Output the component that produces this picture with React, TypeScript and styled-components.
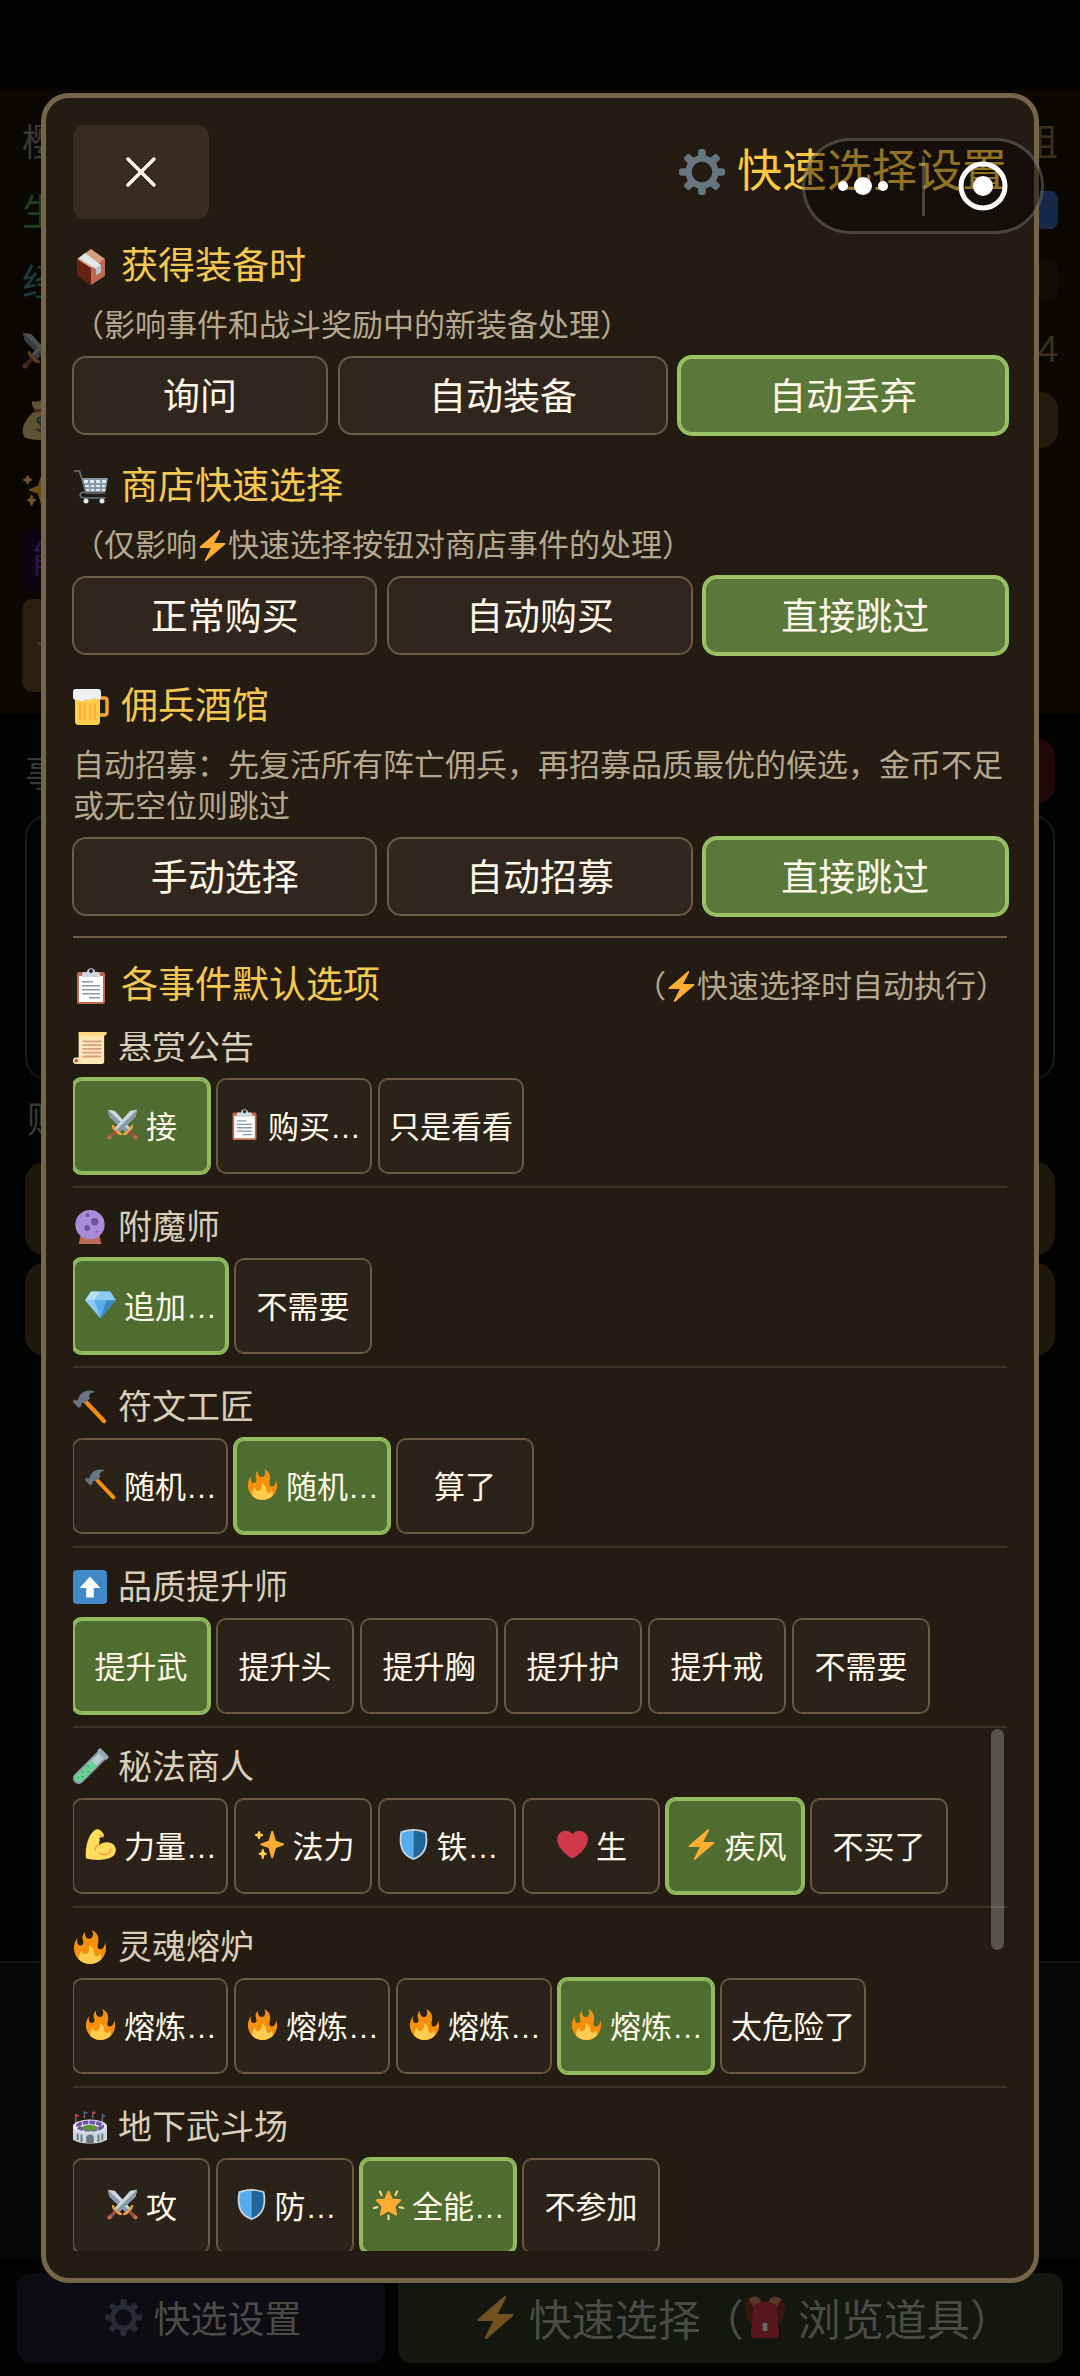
import React, { useLayoutEffect, useRef, useState } from "react";
import styled, { createGlobalStyle, css } from "styled-components";

const GlobalStyle = createGlobalStyle`
  *, *::before, *::after { box-sizing: border-box; }
  body {
    margin: 0;
    background: #020201;
    font-family: "Liberation Sans", "Noto Sans CJK SC", sans-serif;
  }
  button { font-family: inherit; cursor: pointer; }
  h2, h3, h4, p { margin: 0; font-weight: 400; }
`;

/* ---------- emoji-style icons, all on a 36 x 36 grid ---------- */

const icons: Record<string, React.ReactNode> = {
  gear: (
    <path
      fill="#66757f"
      d="M34 15h-3.362c-.324-1.369-.864-2.651-1.582-3.814l2.379-2.379c.781-.781.781-2.048 0-2.829l-1.414-1.414c-.781-.781-2.047-.781-2.828 0l-2.379 2.379C23.65 6.225 22.369 5.686 21 5.362V2c0-1.104-.896-2-2-2h-2c-1.104 0-2 .896-2 2v3.362c-1.369.324-2.651.864-3.814 1.582L8.808 4.565c-.781-.781-2.048-.781-2.828 0L4.565 5.979c-.781.781-.781 2.048-.001 2.829l2.379 2.379C6.225 12.35 5.686 13.632 5.362 15H2c-1.104 0-2 .896-2 2v2c0 1.104.896 2 2 2h3.362c.324 1.368.864 2.65 1.582 3.813l-2.379 2.379c-.78.78-.78 2.048.001 2.829l1.414 1.414c.78.78 2.047.78 2.828 0l2.379-2.379c1.163.719 2.445 1.258 3.814 1.582V34c0 1.104.896 2 2 2h2c1.104 0 2-.896 2-2v-3.362c1.368-.324 2.65-.864 3.813-1.582l2.379 2.379c.781.781 2.047.781 2.828 0l1.414-1.414c.781-.781.781-2.048 0-2.829l-2.379-2.379c.719-1.163 1.258-2.445 1.582-3.814H34c1.104 0 2-.896 2-2v-2C36 15.896 35.104 15 34 15zM18 26c-4.418 0-8-3.582-8-8s3.582-8 8-8 8 3.582 8 8-3.582 8-8 8z"
    />
  ),
  package: (
    <>
      <path fill="#662113" d="M4 10l14 8v18L4 27z" />
      <path fill="#c1694f" d="M32 10l-14 8v18l14-9z" />
      <path fill="#d99e82" d="M18 0L4 10l14 9 14-9z" />
      <path fill="#e1e8ed" d="M12 4L6 9l17 11v6l5-3v-7z" />
      <path fill="#b8c5ce" d="M23 19l5-3v7l-5 3z" />
    </>
  ),
  cart: (
    <>
      <path fill="#8899a6" d="M9 9h26l-2.500 14H12z" />
      <g fill="#e1e8ed">
        <path d="M11 11h4v3h-4zM17 11h4v3h-4zM23 11h4v3h-4zM29 11h4v3h-4zM12 16h4v2h-4zM18 16h3v2h-3zM23 16h4v2h-4zM29 16h3v2h-3zM13 20h3v2h-3zM18 20h3v2h-3zM23 20h4v2h-4zM29 20h3v2h-3z" />
      </g>
      <path
        d="M1 2h5.500L13 24h19M12 23c-6 0-7 6 0 6h21"
        fill="none"
        stroke="#66757f"
        strokeWidth="1.600"
      />
      <circle cx="13" cy="32" r="2.500" fill="#e1e8ed" />
      <circle cx="29" cy="32" r="2.500" fill="#e1e8ed" />
    </>
  ),
  beer: (
    <>
      <path
        d="M25 9h6.500c1.500 0 2.500 1 2.500 2.500v12c0 1.500-1 2.500-2.500 2.500H25"
        fill="none"
        stroke="#f4a53a"
        strokeWidth="3.500"
      />
      <path fill="#ffcc4d" d="M2 8h25v24c0 2.500-1 4-3.500 4h-18C3 36 2 34.500 2 32z" />
      <g stroke="#ffac33" strokeWidth="2" strokeLinecap="round">
        <path d="M7 15v15M12 15v15M17 15v15M22 15v15" />
      </g>
      <path
        fill="#f0eff4"
        d="M2 0h23c2 0 3 1 3 3v5c0 2-2 3-4 2-2-1-3-1-5 0-3 2-5 0-7 1s-4 2-6 0c-3 1-6 0-6-3V3c0-2 1-3 2-3z"
      />
    </>
  ),
  clipboard: (
    <>
      <rect x="4" y="4" width="28" height="32" rx="2" fill="#c1694f" />
      <path fill="#fff" d="M6 8h24v26H6z" />
      <path fill="#ccd6dd" d="M9 9V6c0-1 1-2 2-2h3c0-5 8-5 8 0h3c1 0 2 1 2 2v3z" />
      <circle cx="18" cy="3" r="2" fill="#292f33" />
      <g fill="#8899a6">
        <path d="M9 13h11v1.500H9zM9 17h18v1.500H9zM9 21h18v1.500H9zM9 25h18v1.500H9zM16 29h11v1.500H16z" />
      </g>
    </>
  ),
  scroll: (
    <>
      <path fill="#ffe8b6" d="M6 3h27v31c0 1-1 2-2 2H4c3 0 3-2 2-5z" />
      <path fill="#ffd983" d="M6 1h28c3 0 2 5-1 5H6z" />
      <path fill="#ffe8b6" d="M3 29h26c2 0 2 7 0 7H3c-4 0-4-7 0-7z" />
      <circle cx="3.500" cy="32.500" r="2" fill="#c1694f" />
      <path fill="#d99e82" d="M10 11h20v2H10zM10 15h20v2H10zM10 19h20v2H10zM10 23h20v2H10zM10 27h20v2H10z" />
    </>
  ),
  swords: (
    <>
      <path fill="#ccd6dd" d="M1 1l8 1 18 20-5 5L3 9z" />
      <path fill="#8899a6" d="M1 1l24 23-3 3L3 9z" />
      <path fill="#ccd6dd" d="M35 1l-8 1L9 22l5 5L33 9z" />
      <path fill="#8899a6" d="M35 1L11 24l3 3L33 9z" />
      <path
        stroke="#f4a045"
        strokeWidth="3"
        strokeLinecap="round"
        d="M7 20c1 4 5 8 9 9M29 20c-1 4-5 8-9 9"
        fill="none"
      />
      <path stroke="#9c5039" strokeWidth="4" d="M10 26l-7 7M26 26l7 7" />
      <circle cx="3" cy="33" r="2.500" fill="#c1694f" />
      <circle cx="33" cy="33" r="2.500" fill="#c1694f" />
    </>
  ),
  crystal: (
    <>
      <path fill="#be6b52" d="M8 27h20l2 9H6z" />
      <circle cx="18" cy="15.500" r="15.500" fill="#aa8dd8" />
      <circle cx="23" cy="12.500" r="4" fill="#7450a8" />
      <circle cx="15" cy="19" r="3" fill="#7450a8" />
      <circle cx="15.500" cy="5.500" r="2" fill="#7450a8" />
      <circle cx="25" cy="23" r="1.500" fill="#9266cc" />
    </>
  ),
  gem: (
    <>
      <path fill="#5dadec" d="M7 3h22l7 10-18 21L0 13z" />
      <path fill="#bdddf4" d="M7 3h11l-7 10H0z" />
      <path fill="#8ccaf7" d="M18 3l7 10H11zM29 3l7 10H25L18 3z" />
      <path fill="#8ccaf7" d="M0 13h11l7 21z" />
      <path fill="#3b88c3" d="M36 13H25l-7 21z" />
    </>
  ),
  hammer: (
    <>
      <path
        stroke="#f4900c"
        strokeWidth="4.500"
        strokeLinecap="round"
        d="M14 13l19 20"
      />
      <path
        fill="#66757f"
        d="M21 1C14-1 9 3 7 6c-2 3-1 4-3 5l-3-1-1 3 6 6 3-2c-1-3 1-4 3-3l6-5c-2-4 0-6 5-7z"
      />
    </>
  ),
  fire: (
    <>
      <path
        fill="#f4900c"
        d="M35 19c0-2.062-.367-4.039-1.040-5.868-.46 5.389-3.333 8.157-6.335 6.868-2.812-1.208-.917-5.917-.777-8.164.236-3.809-.012-8.169-6.931-11.794 2.875 5.500.333 8.917-2.333 9.125-2.958.231-5.667-2.542-4.667-7.042-3.238 2.386-3.332 6.402-2.333 9 1.042 2.708-.042 4.958-2.583 5.208-2.840.280-4.418-3.041-2.963-8.333C2.520 10.965 1 14.805 1 19c0 9.389 7.611 17 17 17s17-7.611 17-17z"
      />
      <path
        fill="#ffcc4d"
        d="M28.394 23.999c.148 3.084-2.561 4.293-4.019 3.709-2.106-.843-1.541-2.291-2.083-5.291s-2.625-5.083-5.708-6c2.250 6.333-1.247 8.667-3.080 9.084-1.872.426-3.753-.001-3.968-4.007C7.352 23.668 6 26.676 6 30c0 .368.023.730.055 1.090C9.125 34.124 13.342 36 18 36s8.875-1.876 11.945-4.910c.032-.360.055-.722.055-1.090 0-2.187-.584-4.236-1.606-6.001z"
      />
    </>
  ),
  up: (
    <>
      <rect width="36" height="36" rx="4" fill="#4289c9" />
      <path fill="#fff" d="M18 7l11 12h-7v10h-8V19H7z" />
    </>
  ),
  tube: (
    <g transform="rotate(45 18 18)">
      <path fill="#8899a6" d="M12 0h12v35c0 8-12 8-12 0z" />
      <path fill="#b8c9cf" d="M14 1h8v34c0 5-8 5-8 0z" />
      <path fill="#68d391" d="M14 12h8v23c0 5-8 5-8 0z" />
      <rect x="11" y="-4" width="14" height="5" rx="2" fill="#9aa7b5" />
      <g fill="#2fa464">
        <circle cx="16" cy="19" r="1" />
        <circle cx="20" cy="23" r="1" />
        <circle cx="16" cy="27" r="1" />
        <circle cx="20" cy="31" r="1" />
        <circle cx="17" cy="35" r="1" />
      </g>
    </g>
  ),
  muscle: (
    <>
      <path
        fill="#ffdc5d"
        d="M12 1c3-2 8 1 10 6 0 3-3 3-5 3 0 3 0 6-1 9 5-5 14-5 18 0 4 6 1 13-6 15-9 3-20 2-27 0C0 20 4 6 12 1z"
      />
      <path
        fill="none"
        stroke="#ef9645"
        strokeWidth="1.500"
        strokeLinecap="round"
        d="M17 7l4 2M16 19c-2 0-4 2-4 5M17 28c4 3 13 2 13-5"
      />
    </>
  ),
  sparkles: (
    <>
      <path
        fill="#ffac33"
        d="M34.347 16.893l-8.899-3.294-3.323-10.891c-.128-.420-.517-.708-.956-.708-.439 0-.828.288-.956.708l-3.322 10.891-8.900 3.294c-.393.146-.653.519-.653.938 0 .418.260.793.653.938l8.895 3.293 3.324 11.223c.126.424.516.715.959.715.442 0 .833-.291.959-.716l3.324-11.223 8.896-3.293c.391-.144.652-.518.652-.937 0-.418-.261-.792-.653-.938z"
      />
      <path
        fill="#ffcc4d"
        d="M14.347 27.894l-2.314-.856-.900-3.300c-.118-.436-.513-.738-.964-.738-.451 0-.846.302-.965.737l-.900 3.300-2.313.856c-.393.146-.653.520-.653.938 0 .418.260.793.653.938l2.301.853.907 3.622c.112.444.511.756.970.756.459 0 .858-.312.970-.757l.907-3.622 2.301-.853c.393-.144.653-.519.653-.937 0-.418-.260-.793-.653-.937zM10.009 6.231l-2.364-.875-.876-2.365c-.145-.393-.519-.653-.938-.653-.418 0-.792.260-.938.653l-.875 2.365-2.365.875c-.393.146-.653.520-.653.938 0 .418.260.793.653.938l2.365.875.875 2.365c.146.393.520.653.938.653.418 0 .792-.260.938-.653l.875-2.365 2.365-.875c.393-.146.653-.520.653-.938 0-.418-.260-.792-.653-.938z"
      />
    </>
  ),
  shield: (
    <>
      <path fill="#ccd6dd" d="M33 3c-7-3-15-3-15-3S10 0 3 3C0 18 3 31 18 36c15-5 18-18 15-33z" />
      <path fill="#55acee" d="M18 33.884C6.412 29.729 1.961 19.831 4.760 4.444 11.063 2.029 17.928 2 18 2v31.884z" />
      <path fill="#269" d="M31.240 4.444C24.937 2.029 18.073 2.001 18 2v31.884c11.588-4.155 16.039-14.053 13.240-29.440z" />
    </>
  ),
  heart: (
    <path
      fill="#d0384a"
      d="M35.885 11.833c0-5.450-4.418-9.868-9.867-9.868-3.308 0-6.227 1.633-8.018 4.129-1.791-2.496-4.710-4.129-8.017-4.129-5.450 0-9.868 4.417-9.868 9.868 0 .772.098 1.520.266 2.241C1.751 22.587 11.216 31.568 18 34.034c6.783-2.466 16.249-11.447 17.617-19.959.170-.721.268-1.469.268-2.242z"
    />
  ),
  bolt: (
    <path
      fill="#ffac33"
      d="M32.938 15.651C32.792 15.260 32.418 15 32 15H19.925L26.890 1.458c.219-.426.106-.947-.271-1.243C26.437.071 26.218 0 26 0c-.233 0-.466.082-.653.243L18 6.588 3.347 19.243c-.316.273-.430.714-.284 1.105S3.582 21 4 21h12.075L9.110 34.542c-.219.426-.106.947.271 1.243.182.144.401.215.619.215.233 0 .466-.082.653-.243L18 29.412l14.653-12.655c.317-.273.430-.714.285-1.106z"
    />
  ),
  stadium: (
    <>
      <path stroke="#8899a6" strokeWidth="1" d="M3 14V4M12 9V2M21 9V2M31 13V4" />
      <path fill="#dd2e44" d="M3 4l4 2-4 2zM21 1l4 2-4 2z" />
      <path fill="#3b5fa8" d="M12 1l4 2-4 2zM31 4l4 2-4 2z" />
      <path fill="#ccd6dd" d="M0 17h36v14c-4 6-32 6-36 0z" />
      <ellipse cx="18" cy="17" rx="18" ry="7" fill="#e1e8ed" />
      <ellipse cx="18" cy="17" rx="13" ry="4" fill="none" stroke="#7450a8" strokeWidth="4" strokeDasharray="6 1" />
      <ellipse cx="18" cy="19" rx="9" ry="3" fill="#5c913b" />
      <path stroke="#66757f" strokeWidth="2" d="M5 25v7M9 26v8M27 26v8M31 25v7" />
      <path fill="#66757f" d="M14 35v-6c0-4 8-4 8 0v6z" />
    </>
  ),
  star: (
    <>
      <path
        d="M18 3l4 9 10 1-7 7 2 10-9-5-9 5 2-10-7-7 10-1z"
        fill="#ffac33"
        stroke="#ffac33"
        strokeWidth="2"
        strokeLinejoin="round"
      />
      <path
        stroke="#ffd983"
        strokeWidth="2.500"
        strokeLinecap="round"
        d="M8 3l2 4M28 3l-2 4M1 22l4-1M35 22l-4-1M18 31v4"
      />
    </>
  ),
  money: (
    <>
      <path fill="#fdd888" d="M12 10C3 16-2 27 2 33c4 4 28 4 32 0 4-6-1-17-10-23z" />
      <path fill="#bf6952" d="M11 8h14v3H11z" />
      <path fill="#fdd888" d="M11 8c-2-3-3-6-1-7 3 2 4 0 8-1 4 1 5 3 8 1 2 1 1 4-1 7z" />
      <path
        fill="none"
        stroke="#67757f"
        strokeWidth="2.500"
        d="M22 17c-3-3-9-1-8 2s8 3 8 6-6 4-9 1M18 14v16"
      />
    </>
  ),
  backpack: (
    <>
      <path fill="#6a1313" d="M1 9C2-1 11-1 13 5l-3 18C4 25 0 18 1 9zM35 9C34-1 25-1 23 5l3 18c6 2 10-5 9-14z" />
      <path fill="#c1694f" d="M4 3c4-4 9-3 11 2l-7 4zM32 3c-4-4-9-3-11 2l7 4z" />
      <path fill="#be1931" d="M8 8c7-4 13-4 20 0l2 26c0 1-1 2-2 2H8c-1 0-2-1-2-2z" />
      <rect x="16" y="23" width="4" height="7" fill="#e1e8ed" />
    </>
  ),
};

const Svg = styled.svg<{ $size: number; $dim?: number }>`
  flex: none;
  display: block;
  width: ${(p) => p.$size}px;
  height: ${(p) => p.$size}px;
  opacity: ${(p) => p.$dim ?? 1};
  overflow: visible;
`;

const Icon = ({ name, size, dim }: { name: string; size: number; dim?: number }) => (
  <Svg viewBox="0 0 36 36" $size={size} $dim={dim} aria-hidden="true">
    {icons[name]}
  </Svg>
);

/* ---------- dimmed game page behind the dialog ---------- */

const Page = styled.div`
  display: flex;
  flex-direction: column;
  min-height: 100vh;
  padding-top: 89px;
  font-size: 37px;
  color: #3a3937;
`;

const Status = styled.section`
  padding: 16px 22px 22px;
  background: #0b0804;
`;

const StatusRow = styled.div<{ $color?: string }>`
  display: flex;
  align-items: center;
  justify-content: space-between;
  height: 70px;
  color: ${(p) => p.$color ?? "#3a3937"};
`;

const StatusValue = styled.span`
  color: #3b2f17;
`;

const Block = styled.span<{ $h: number; $bg: string; $r: number }>`
  width: 80px;
  height: ${(p) => p.$h}px;
  border-radius: ${(p) => p.$r}px;
  background: ${(p) => p.$bg};
`;

const Tag = styled.span`
  padding: 0 10px;
  line-height: 61px;
  border-radius: 8px;
  background: #0d0612;
  color: #2c1447;
`;

const Slot = styled.div`
  margin-top: 4px;
  padding: 0 14px;
  width: 200px;
  line-height: 93px;
  border-radius: 10px;
  background: #2a1f0e;
`;

const Events = styled.section`
  flex: 1;
  display: flex;
  flex-direction: column;
  padding: 25px 25px 0;
`;

const EventHead = styled.div`
  display: flex;
  align-items: center;
  justify-content: space-between;
  height: 64px;
`;

const EventBox = styled.div`
  height: 265px;
  margin-top: 12px;
  border: 2px solid #1b1a18;
  border-radius: 22px;
`;

const BuyLabel = styled.div`
  line-height: 82px;
  padding-left: 2px;
`;

const BuyCard = styled.div`
  height: 93px;
  margin-bottom: 8px;
  border-radius: 20px;
  background: #1e170c;
`;

const Log = styled.section`
  height: 297px;
  border-top: 2px solid #171513;
  background: #090705;
`;

const Footer = styled.footer`
  display: flex;
  gap: 13px;
  padding: 15px 17px 13px;
  background: #030302;
`;

const FooterButton = styled.button<{ $grow: number; $bg: string; $size: number }>`
  flex: ${(p) => p.$grow} 1 0;
  display: flex;
  align-items: center;
  justify-content: center;
  gap: 12px;
  height: 90px;
  padding: 0 0 2px 4px;
  border: 0;
  border-radius: 14px;
  background: ${(p) => p.$bg};
  color: #4a4a46;
  font-size: ${(p) => p.$size}px;
  white-space: nowrap;
`;

const Inline = styled.span`
  display: flex;
  align-items: center;
`;

const ClosingParen = styled.span`
  font-feature-settings: "halt";
`;

/* ---------- dialog ---------- */

const Overlay = styled.div`
  position: fixed;
  inset: 0;
  display: flex;
  padding: 93px 41px;
`;

const Dialog = styled.div`
  flex: 1;
  min-width: 0;
  display: flex;
  flex-direction: column;
  padding: 27px;
  border: 5px solid #756549;
  border-radius: 28px;
  background: #241b13;
`;

const Header = styled.header`
  display: flex;
  align-items: center;
  justify-content: space-between;
  margin-bottom: 22px;
`;

const CloseButton = styled.button`
  display: flex;
  align-items: center;
  justify-content: center;
  width: 136px;
  height: 94px;
  padding: 0;
  border: 0;
  border-radius: 12px;
  background: #382b20;
`;

const Title = styled.h2`
  display: flex;
  align-items: center;
  gap: 12px;
  font-size: 45px;
  line-height: 64px;
  color: #ffc93f;
`;

const Setting = styled.section`
  display: flex;
  flex-direction: column;
  margin-bottom: 27px;

  &:last-of-type {
    margin-bottom: 21px;
  }
`;

const SectionTitle = styled.h3`
  display: flex;
  align-items: center;
  gap: 12px;
  font-size: 37px;
  line-height: 52px;
  color: #f5c94f;
`;

const Hint = styled.p`
  font-size: 31px;
  line-height: 41px;
  color: #b5a88c;

  svg {
    display: inline-block;
    vertical-align: -5px;
  }
`;

const SettingHint = styled(Hint)`
  margin: 12px 0 11px;
`;

const ring = (on: boolean, line: string, active: string) => {
  const w = on ? 2 : 1;
  const c = on ? active : line;
  return css`
    box-shadow: 0 0 0 ${w}px ${c}, inset 0 0 0 ${w}px ${c};
  `;
};

const ModeRow = styled.div`
  display: flex;
  gap: 12px;
`;

const ModeButton = styled.button<{ $on: boolean }>`
  flex: 1 1 auto;
  height: 77px;
  padding: 0 20px 3px;
  border: 0;
  border-radius: 13px;
  background: ${(p) => (p.$on ? "#5a783a" : "#30261e")};
  color: #fff8e8;
  font-size: 37px;
  ${(p) => ring(p.$on, "#6e6047", "#9ac466")}
`;

const EventsHead = styled.div`
  display: flex;
  align-items: center;
  justify-content: space-between;
  padding: 22px 0 20px;
  border-top: 2px solid #6b5c42;
`;

const ListFrame = styled.div`
  position: relative;
  flex: 1;
  min-height: 0;
  display: flex;
`;

const List = styled.div`
  flex: 1;
  overflow-y: auto;
  scrollbar-width: none;
`;

const Thumb = styled.div`
  position: absolute;
  right: 3px;
  top: 697px;
  width: 13px;
  height: 221px;
  border-radius: 7px;
  background: rgba(136, 136, 136, 0.52);
`;

const EventItem = styled.section`
  padding-bottom: 13px;
  margin-bottom: 14px;
  border-bottom: 2px solid #3e3325;
`;

const EventTitle = styled.h4`
  display: flex;
  align-items: center;
  gap: 11px;
  padding: 1px 0 8px;
  font-size: 34px;
  line-height: 48px;
  color: #d9cfb9;
`;

const Chips = styled.div`
  display: flex;
  gap: 8px;
`;

const Chip = styled.button<{ $on: boolean }>`
  display: flex;
  align-items: center;
  justify-content: center;
  min-width: 136px;
  height: 94px;
  padding: 0 10px 3px;
  border: 0;
  border-radius: 9px;
  background: ${(p) => (p.$on ? "#4f6d31" : "#2b2319")};
  color: #fff8e8;
  font-size: 31px;
  white-space: nowrap;
  ${(p) => ring(p.$on, "#6b5b43", "#92bb5f")}

  svg {
    margin: 0 8px 0 2px;
  }
`;

/* ---------- system capsule ---------- */

const Capsule = styled.div`
  position: fixed;
  top: 138px;
  right: 36px;
  display: flex;
  align-items: center;
  width: 242px;
  height: 96px;
  border: 3px solid rgba(255, 255, 255, 0.22);
  border-radius: 48px;
  background: rgba(0, 0, 0, 0.43);
`;

const CapsuleButton = styled.button`
  flex: 1;
  display: flex;
  align-items: center;
  justify-content: center;
  height: 60px;
  padding: 0;
  border: 0;
  background: none;

  & + & {
    border-left: 3px solid rgba(255, 255, 255, 0.22);
  }
`;

const settings = [
  {
    icon: "package",
    title: "获得装备时",
    hint: <>（影响事件和战斗奖励中的新装备处理）</>,
    options: ["询问", "自动装备", "自动丢弃"],
  },
  {
    icon: "cart",
    title: "商店快速选择",
    hint: (
      <>
        （仅影响
        <Icon name="bolt" size={31} />
        快速选择按钮对商店事件的处理）
      </>
    ),
    options: ["正常购买", "自动购买", "直接跳过"],
  },
  {
    icon: "beer",
    title: "佣兵酒馆",
    hint: <>自动招募：先复活所有阵亡佣兵，再招募品质最优的候选，金币不足或无空位则跳过</>,
    options: ["手动选择", "自动招募", "直接跳过"],
  },
];

type Option = [icon: string | null, label: string];

const events: { icon: string; title: string; on: number; options: Option[] }[] = [
  {
    icon: "scroll",
    title: "悬赏公告",
    on: 0,
    options: [["swords", "接"], ["clipboard", "购买…"], [null, "只是看看"]],
  },
  { icon: "crystal", title: "附魔师", on: 0, options: [["gem", "追加…"], [null, "不需要"]] },
  {
    icon: "hammer",
    title: "符文工匠",
    on: 1,
    options: [["hammer", "随机…"], ["fire", "随机…"], [null, "算了"]],
  },
  {
    icon: "up",
    title: "品质提升师",
    on: 0,
    options: [
      [null, "提升武"],
      [null, "提升头"],
      [null, "提升胸"],
      [null, "提升护"],
      [null, "提升戒"],
      [null, "不需要"],
    ],
  },
  {
    icon: "tube",
    title: "秘法商人",
    on: 4,
    options: [
      ["muscle", "力量…"],
      ["sparkles", "法力"],
      ["shield", "铁…"],
      ["heart", "生"],
      ["bolt", "疾风"],
      [null, "不买了"],
    ],
  },
  {
    icon: "fire",
    title: "灵魂熔炉",
    on: 3,
    options: [
      ["fire", "熔炼…"],
      ["fire", "熔炼…"],
      ["fire", "熔炼…"],
      ["fire", "熔炼…"],
      [null, "太危险了"],
    ],
  },
  {
    icon: "stadium",
    title: "地下武斗场",
    on: 2,
    options: [["swords", "攻"], ["shield", "防…"], ["star", "全能…"], [null, "不参加"]],
  },
];

const Background = () => (
  <Page>
    <Status>
      <StatusRow>
        樱<StatusValue>组</StatusValue>
      </StatusRow>
      <StatusRow $color="#1f3f1d">
        生<Block $h={38} $bg="#16294a" $r={8} />
      </StatusRow>
      <StatusRow $color="#1a3a3e">
        经<Block $h={38} $bg="#100d0a" $r={8} />
      </StatusRow>
      <StatusRow>
        <Icon name="swords" size={37} dim={0.35} />
        <StatusValue>4</StatusValue>
      </StatusRow>
      <StatusRow>
        <Icon name="money" size={40} dim={0.35} />
        <Block $h={56} $bg="#251b0d" $r={18} />
      </StatusRow>
      <StatusRow>
        <Icon name="sparkles" size={34} dim={0.4} />
      </StatusRow>
      <StatusRow>
        <Tag>能</Tag>
      </StatusRow>
      <Slot>一</Slot>
    </Status>
    <Events>
      <EventHead>
        事<Block $h={64} $bg="#21080a" $r={18} />
      </EventHead>
      <EventBox />
      <BuyLabel>购</BuyLabel>
      <BuyCard />
      <BuyCard />
    </Events>
    <Log />
    <Footer>
      <FooterButton $grow={367} $bg="#0d0c12" $size={37}>
        <Icon name="gear" size={37} dim={0.3} />
        快选设置
      </FooterButton>
      <FooterButton $grow={666} $bg="#131710" $size={43}>
        <Icon name="bolt" size={43} dim={0.4} />
        <Inline>
          快速选择（
          <Icon name="backpack" size={42} dim={0.4} />
        </Inline>
        <span>
          浏览道具<ClosingParen>）</ClosingParen>
        </span>
      </FooterButton>
    </Footer>
  </Page>
);

export default function App() {
  const listRef = useRef<HTMLDivElement>(null);
  const [modes, setModes] = useState([2, 2, 2]);
  const [picks, setPicks] = useState(events.map((e) => e.on));

  useLayoutEffect(() => {
    if (listRef.current) listRef.current.scrollTop = 10;
  }, []);

  const replace = (list: number[], at: number, value: number) =>
    list.map((v, i) => (i === at ? value : v));

  return (
    <>
      <GlobalStyle />
      <Background />
      <Overlay>
        <Dialog role="dialog" aria-labelledby="dialog-title">
          <Header>
            <CloseButton aria-label="关闭">
              <svg width="32" height="32" viewBox="0 0 32 32" aria-hidden="true">
                <path d="M3 3l26 26M29 3L3 29" stroke="#fff8e8" strokeWidth="3.500" strokeLinecap="round" />
              </svg>
            </CloseButton>
            <Title id="dialog-title">
              <Icon name="gear" size={46} />
              快速选择设置
            </Title>
          </Header>

          {settings.map((s, i) => (
            <Setting key={s.title}>
              <SectionTitle>
                <Icon name={s.icon} size={36} />
                {s.title}
              </SectionTitle>
              <SettingHint>{s.hint}</SettingHint>
              <ModeRow>
                {s.options.map((label, n) => (
                  <ModeButton
                    key={label}
                    $on={modes[i] === n}
                    aria-pressed={modes[i] === n}
                    onClick={() => setModes(replace(modes, i, n))}
                  >
                    {label}
                  </ModeButton>
                ))}
              </ModeRow>
            </Setting>
          ))}

          <EventsHead>
            <SectionTitle>
              <Icon name="clipboard" size={36} />
              各事件默认选项
            </SectionTitle>
            <Hint>
              （<Icon name="bolt" size={31} />
              快速选择时自动执行）
            </Hint>
          </EventsHead>

          <ListFrame>
            <List ref={listRef}>
              {events.map((e, i) => (
                <EventItem key={e.title}>
                  <EventTitle>
                    <Icon name={e.icon} size={34} />
                    {e.title}
                  </EventTitle>
                  <Chips>
                    {e.options.map(([icon, label], n) => (
                      <Chip
                        key={n}
                        $on={picks[i] === n}
                        aria-pressed={picks[i] === n}
                        onClick={() => setPicks(replace(picks, i, n))}
                      >
                        {icon && <Icon name={icon} size={31} />}
                        {label}
                      </Chip>
                    ))}
                  </Chips>
                </EventItem>
              ))}
            </List>
            <Thumb />
          </ListFrame>
        </Dialog>
      </Overlay>
      <Capsule>
        <CapsuleButton aria-label="更多">
          <svg width="52" height="20" viewBox="0 0 52 20" fill="#fff" aria-hidden="true">
            <circle cx="6" cy="10" r="5" />
            <circle cx="26" cy="10" r="9" />
            <circle cx="46" cy="10" r="5" />
          </svg>
        </CapsuleButton>
        <CapsuleButton aria-label="关闭小程序">
          <svg width="50" height="50" viewBox="0 0 50 50" aria-hidden="true">
            <circle cx="25" cy="25" r="22" fill="none" stroke="#fff" strokeWidth="5" />
            <circle cx="25" cy="25" r="10" fill="#fff" />
          </svg>
        </CapsuleButton>
      </Capsule>
    </>
  );
}
